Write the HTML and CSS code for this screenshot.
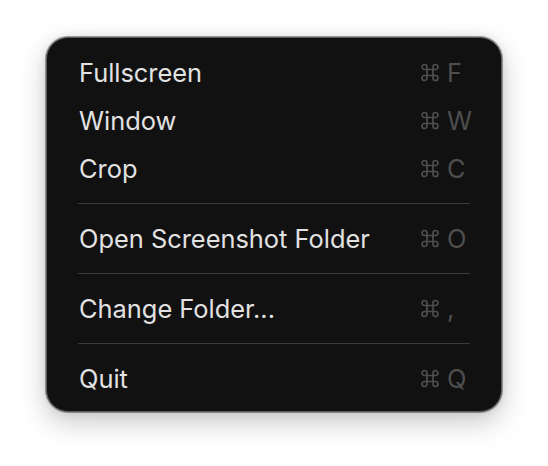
FILE: index.html
```html
<!DOCTYPE html>
<html>
<head>
<meta charset="utf-8">
<link rel="stylesheet" href="styles.css">
</head>
<body>
<div class="menu">
  <div class="item"><span class="label">Fullscreen</span><span class="key"><svg class="cmd" viewBox="0 0 20 19"><path d="M7 6.5V4A2.5 2.5 0 1 0 4.5 6.5H15.5A2.5 2.5 0 1 0 13 4V15A2.5 2.5 0 1 0 15.5 12.5H4.5A2.5 2.5 0 1 0 7 15Z"/></svg>F</span></div>
  <div class="item"><span class="label">Window</span><span class="key"><svg class="cmd" viewBox="0 0 20 19"><path d="M7 6.5V4A2.5 2.5 0 1 0 4.5 6.5H15.5A2.5 2.5 0 1 0 13 4V15A2.5 2.5 0 1 0 15.5 12.5H4.5A2.5 2.5 0 1 0 7 15Z"/></svg>W</span></div>
  <div class="item"><span class="label">Crop</span><span class="key"><svg class="cmd" viewBox="0 0 20 19"><path d="M7 6.5V4A2.5 2.5 0 1 0 4.5 6.5H15.5A2.5 2.5 0 1 0 13 4V15A2.5 2.5 0 1 0 15.5 12.5H4.5A2.5 2.5 0 1 0 7 15Z"/></svg>C</span></div>
  <div class="sep"></div>
  <div class="item"><span class="label">Open Screenshot Folder</span><span class="key"><svg class="cmd" viewBox="0 0 20 19"><path d="M7 6.5V4A2.5 2.5 0 1 0 4.5 6.5H15.5A2.5 2.5 0 1 0 13 4V15A2.5 2.5 0 1 0 15.5 12.5H4.5A2.5 2.5 0 1 0 7 15Z"/></svg>O</span></div>
  <div class="sep"></div>
  <div class="item"><span class="label">Change Folder...</span><span class="key"><svg class="cmd" viewBox="0 0 20 19"><path d="M7 6.5V4A2.5 2.5 0 1 0 4.5 6.5H15.5A2.5 2.5 0 1 0 13 4V15A2.5 2.5 0 1 0 15.5 12.5H4.5A2.5 2.5 0 1 0 7 15Z"/></svg>,</span></div>
  <div class="sep"></div>
  <div class="item"><span class="label">Quit</span><span class="key"><svg class="cmd" viewBox="0 0 20 19"><path d="M7 6.5V4A2.5 2.5 0 1 0 4.5 6.5H15.5A2.5 2.5 0 1 0 13 4V15A2.5 2.5 0 1 0 15.5 12.5H4.5A2.5 2.5 0 1 0 7 15Z"/></svg>Q</span></div>
</div>
</body>
</html>
```
FILE: styles.css
```css
html, body {
  margin: 0;
  background: #ffffff;
}
body {
  padding: 37px 46px;
  font-family: Inter, "Noto Sans", sans-serif;
}
.menu {
  width: 456px;
  box-sizing: border-box;
  background: #111111;
  border: 1px solid #5c5c5c;
  border-radius: 22px;
  padding: 10px 0 9px;
  box-shadow: 0 0 0 1px rgba(0,0,0,0.35), 0 10px 28px rgba(0,0,0,0.22), 0 0 10px rgba(0,0,0,0.1);
}
.item {
  height: 48px;
  display: flex;
  align-items: center;
  justify-content: space-between;
  padding: 0 29px 0 32px;
}
.label {
  color: #e2e2e2;
  font-size: 25.4px;
}
.key {
  width: 52px;
  color: #4e4e4e;
  font-size: 25.4px;
  display: flex;
  align-items: center;
  gap: 7px;
}
.cmd {
  width: 20px;
  height: 19px;
  flex: none;
  fill: none;
  stroke: #4e4e4e;
  stroke-width: 1.7;
}
.sep {
  height: 22px;
  display: flex;
  align-items: center;
  padding: 0 31px;
}
.sep::before {
  content: "";
  flex: 1;
  height: 1px;
  background: #3a3a3a;
}
```
